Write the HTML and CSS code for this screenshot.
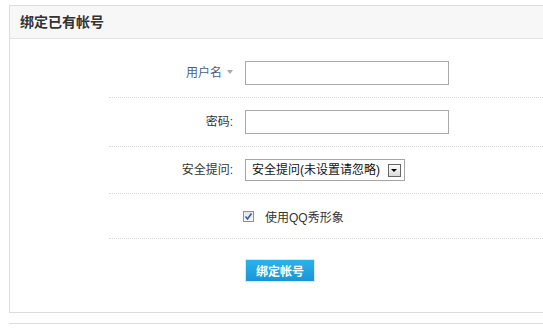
FILE: index.html
```html
<!DOCTYPE html>
<html lang="zh-CN">
<head>
    <meta charset="UTF-8">
    <meta name="viewport" content="width=device-width, initial-scale=1.0">
    <title>绑定已有帐号</title>
    <link rel="stylesheet" href="styles.css">
</head>
<body>

    <div class="panel">
        <div class="panel-head">绑定已有帐号</div>
        <div class="panel-body">
            <div class="form-row">
                <div class="form-label user-label">用户名<span class="caret"></span></div>
                <div class="form-field"><input type="text" class="text-input"></div>
            </div>
            <div class="form-row">
                <div class="form-label">密码:</div>
                <div class="form-field"><input type="password" class="text-input"></div>
            </div>
            <div class="form-row">
                <div class="form-label">安全提问:</div>
                <div class="form-field">
                    <div class="select-box">
                        <span class="select-text">安全提问(未设置请忽略)</span>
                        <span class="select-btn"></span>
                    </div>
                </div>
            </div>
            <div class="form-row check-row">
                <div class="form-label"></div>
                <div class="form-field">
                    <label class="check">
                        <span class="check-box">
                            <svg width="9" height="9" viewBox="0 0 9 9"><path d="M1.5 4.5 L3.5 7 L7.5 1.5" fill="none" stroke="#3a5aa8" stroke-width="1.6"/></svg>
                        </span>
                        使用QQ秀形象
                    </label>
                </div>
            </div>
            <div class="form-row last-row">
                <div class="form-label"></div>
                <div class="form-field"><button class="submit-btn">绑定帐号</button></div>
            </div>
        </div>
    </div>
    <div class="footer-line"></div>

</body>
</html>
```

FILE: styles.css
```css
html, body {
    overflow: hidden;
}
body {
    margin: 0;
    background-color: #fff;
    font-family: 'Liberation Sans', 'Noto Sans CJK SC', sans-serif;
    font-size: 12px;
    color: #333;
}
.panel {
    margin: 5px 0 0 9px;
    width: 545px;
    border: 1px solid #ddd;
}
.panel-head {
    height: 32px;
    line-height: 32px;
    padding-left: 10px;
    background-color: #f7f7f7;
    border-bottom: 1px solid #e2e2e2;
    font-size: 14px;
    font-weight: bold;
    color: #333;
}
.panel-body {
    padding: 10px 0 30px 99px;
}
.form-row {
    display: flex;
    align-items: center;
    padding: 12px 0;
    border-bottom: 1px dotted #d8d8d8;
}
.last-row {
    border-bottom: none;
    padding-top: 20px;
    padding-bottom: 0;
}
.form-label {
    width: 124px;
    padding-right: 12px;
    text-align: right;
    line-height: 20px;
}
.user-label {
    color: #4a5f80;
}
.caret {
    display: inline-block;
    margin-left: 5px;
    vertical-align: 3px;
    border-left: 3px solid transparent;
    border-right: 3px solid transparent;
    border-top: 4px solid #aaa;
}
.form-field {
    display: flex;
    align-items: center;
}
.text-input {
    box-sizing: border-box;
    width: 204px;
    height: 24px;
    margin: 0;
    border: 1px solid #a9a9a9;
    padding: 2px 4px;
    font-size: 12px;
}
.select-box {
    box-sizing: border-box;
    width: 160px;
    height: 22px;
    border: 1px solid #a5a5a5;
    display: flex;
    align-items: center;
    justify-content: space-between;
    padding: 0 3px 0 6px;
    line-height: 20px;
    color: #111;
}
.select-btn {
    box-sizing: border-box;
    width: 13px;
    height: 13px;
    border: 1px solid #666;
    background: linear-gradient(#fdfdfd, #dcdcdc);
    position: relative;
}
.select-btn::after {
    content: '';
    position: absolute;
    left: 2px;
    top: 4px;
    border-left: 3.5px solid transparent;
    border-right: 3.5px solid transparent;
    border-top: 3px solid #000;
}
.check {
    display: flex;
    align-items: center;
    height: 20px;
    margin-left: -2px;
}
.check-box {
    box-sizing: border-box;
    width: 11px;
    height: 11px;
    border: 1px solid #8f8f9d;
    background: linear-gradient(#e4e4ea, #fafafa);
    display: flex;
    align-items: center;
    justify-content: center;
    margin-right: 11px;
}
.submit-btn {
    box-sizing: border-box;
    width: 70px;
    height: 23px;
    margin: 0;
    padding: 0;
    border: 1px solid #dbe6ee;
    background: linear-gradient(#2bb2ea, #1a95d6);
    background-clip: padding-box;
    color: #fff;
    font-family: inherit;
    font-size: 12px;
    font-weight: bold;
    cursor: pointer;
}
.footer-line {
    margin: 10px 0 0 9px;
    height: 1px;
    background-color: #ddd;
}
```
